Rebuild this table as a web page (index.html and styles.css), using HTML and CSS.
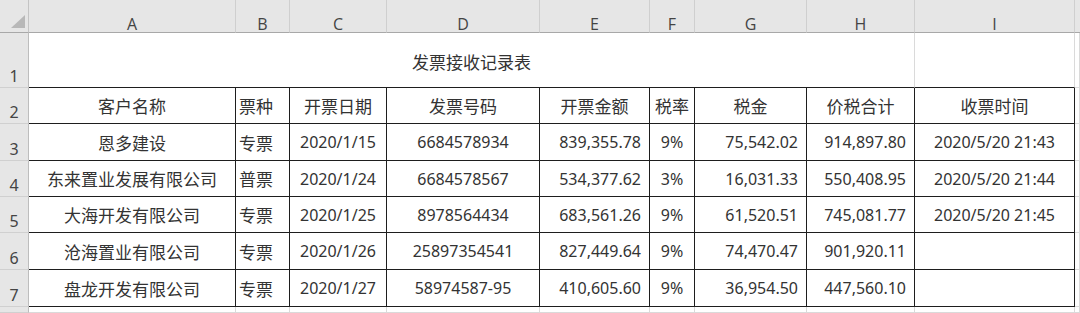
FILE: index.html
```html
<!DOCTYPE html>
<html lang="zh-CN">
<head>
<meta charset="utf-8">
<title>发票接收记录表</title>
<link rel="stylesheet" href="styles.css">
</head>
<body>
<div class="sheet">
  <div class="corner"><span class="tri"></span></div>
  <div class="ch">A</div><div class="ch">B</div><div class="ch">C</div><div class="ch">D</div><div class="ch">E</div><div class="ch">F</div><div class="ch">G</div><div class="ch">H</div><div class="ch">I</div><div class="ch last"></div>

  <div class="rh">1</div>
  <div class="c title zh span8">发票接收记录表</div>
  <div class="c topb"></div>
  <div class="c g"></div>

  <div class="rh">2</div>
  <div class="c b zh">客户名称</div><div class="c b zh left">票种</div><div class="c b zh">开票日期</div><div class="c b zh">发票号码</div><div class="c b zh">开票金额</div><div class="c b zh">税率</div><div class="c b zh">税金</div><div class="c b zh">价税合计</div><div class="c b zh">收票时间</div><div class="c g"></div>

  <div class="rh">3</div>
  <div class="c b zh">恩多建设</div><div class="c b zh left">专票</div><div class="c b">2020/1/15</div><div class="c b">6684578934</div><div class="c b r">839,355.78</div><div class="c b">9%</div><div class="c b r">75,542.02</div><div class="c b r">914,897.80</div><div class="c b">2020/5/20 21:43</div><div class="c g"></div>

  <div class="rh">4</div>
  <div class="c b zh">东来置业发展有限公司</div><div class="c b zh left">普票</div><div class="c b">2020/1/24</div><div class="c b">6684578567</div><div class="c b r">534,377.62</div><div class="c b">3%</div><div class="c b r">16,031.33</div><div class="c b r">550,408.95</div><div class="c b">2020/5/20 21:44</div><div class="c g"></div>

  <div class="rh">5</div>
  <div class="c b zh">大海开发有限公司</div><div class="c b zh left">专票</div><div class="c b">2020/1/25</div><div class="c b">8978564434</div><div class="c b r">683,561.26</div><div class="c b">9%</div><div class="c b r">61,520.51</div><div class="c b r">745,081.77</div><div class="c b">2020/5/20 21:45</div><div class="c g"></div>

  <div class="rh">6</div>
  <div class="c b zh">沧海置业有限公司</div><div class="c b zh left">专票</div><div class="c b">2020/1/26</div><div class="c b">25897354541</div><div class="c b r">827,449.64</div><div class="c b">9%</div><div class="c b r">74,470.47</div><div class="c b r">901,920.11</div><div class="c b"></div><div class="c g"></div>

  <div class="rh">7</div>
  <div class="c b zh">盘龙开发有限公司</div><div class="c b zh left">专票</div><div class="c b">2020/1/27</div><div class="c b">58974587-95</div><div class="c b r">410,605.60</div><div class="c b">9%</div><div class="c b r">36,954.50</div><div class="c b r">447,560.10</div><div class="c b"></div><div class="c g"></div>

  <div class="rh"></div>
  <div class="c g"></div><div class="c g"></div><div class="c g"></div><div class="c g"></div><div class="c g"></div><div class="c g"></div><div class="c g"></div><div class="c g"></div><div class="c g"></div><div class="c g"></div>
</div>
</body>
</html>
```
FILE: styles.css
```css
html, body {
  margin: 0;
  padding: 0;
  background: #ffffff;
  overflow: hidden;
}

.sheet {
  display: grid;
  grid-template-columns: 29px 207px 54px 97px 153px 110px 45px 112px 108px 160px 1fr;
  grid-template-rows: 33px 55px 36px 37px 36px 36px 37px 37px 1fr;
  width: 1080px;
  height: 313px;
  overflow: hidden;
  font-family: "Noto Sans", "Noto Sans CJK SC", sans-serif;
  font-size: 16px;
  color: #333333;
}

.corner {
  position: relative;
  background: #e6e6e6;
  border-right: 1px solid #c4c4c4;
  border-bottom: 1px solid #a8a8a8;
  box-sizing: border-box;
}

.tri {
  position: absolute;
  right: 3px;
  bottom: 4px;
  width: 0;
  height: 0;
  border-left: 14px solid transparent;
  border-bottom: 13px solid #b8b8b8;
}

.ch {
  background: #e6e6e6;
  border-right: 1px solid #cfcfcf;
  border-bottom: 1px solid #a8a8a8;
  box-sizing: border-box;
  text-align: center;
  color: #444444;
  font-family: "Open Sans", "Noto Sans", sans-serif;
  line-height: 20px;
  padding-top: 14px;
}

.ch.last {
  border-right: none;
}

.rh {
  background: #e6e6e6;
  border-right: 1px solid #bdbdbd;
  border-bottom: 1px solid #d0d0d0;
  box-sizing: border-box;
  display: flex;
  align-items: flex-end;
  justify-content: center;
  line-height: 16px;
  padding-bottom: 3px;
  color: #444444;
}

.c {
  box-sizing: border-box;
  border-right: 1px solid #dadada;
  border-bottom: 1px solid #dadada;
  display: flex;
  align-items: center;
  justify-content: center;
  white-space: nowrap;
  overflow: visible;
  min-height: 0;
}

.zh {
  font-size: 17px;
}

.c.b {
  border-right-color: #1e1e1e;
  border-bottom-color: #1e1e1e;
}

.c.r {
  justify-content: flex-end;
  padding-right: 8px;
}

.c.left {
  justify-content: flex-start;
  padding-left: 3px;
}

.span8 {
  grid-column: span 8;
}

.title {
  border-bottom-color: #1e1e1e;
  border-right-color: #dadada;
  padding-top: 2px;
}

.topb {
  border-bottom-color: #1e1e1e;
}
```
